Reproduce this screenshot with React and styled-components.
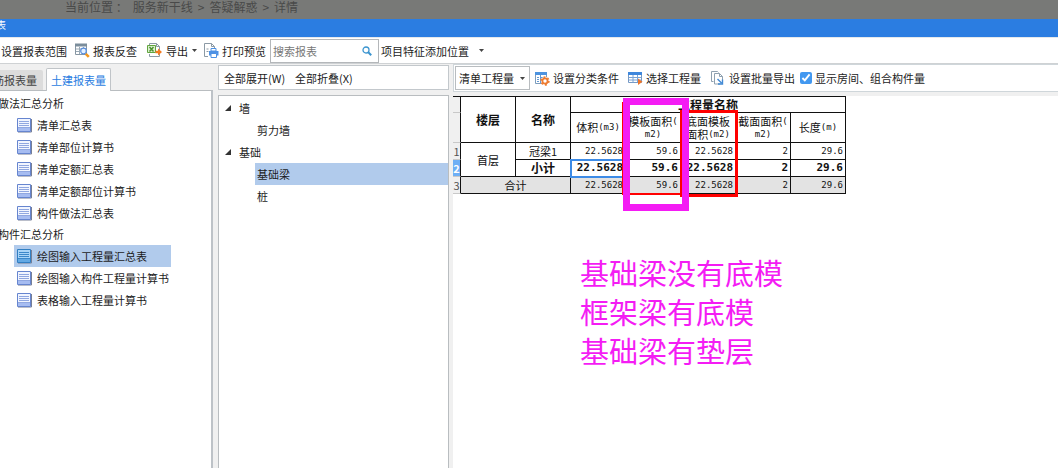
import React, { useState } from 'react'
import styled, { createGlobalStyle, css } from 'styled-components'

const BLUE = '#2b7de1'
const SELECTED = '#b1cbec'
const PANEL_BG = '#f0f0f0'
const LINE = '#c3c8cc'
const MARKER = '#f41cf4'

const GlobalStyle = createGlobalStyle`
  * {
    box-sizing: border-box;
  }

  body {
    margin: 0;
    background: ${PANEL_BG};
  }

  body, button, input, select {
    font-family: "Noto Sans CJK SC", sans-serif;
    font-size: 11px;
    line-height: 16px;
    color: #1c1c1c;
  }

  ul {
    margin: 0;
    padding: 0;
    list-style: none;
  }
`

const Page = styled.div`
  display: flex;
  flex-direction: column;
  min-height: 100vh;
  overflow: hidden;
`

const Breadcrumb = styled.nav`
  display: flex;
  gap: 5px;
  height: 19px;
  padding-left: 65px;
  background: #787977;
  color: #494949;
  font-size: 12px;
  line-height: 14px;
  white-space: pre;
`

const Crumb = styled.a`
  color: inherit;
  text-decoration: none;
`

const TitleBar = styled.header`
  display: flex;
  height: 18px;
  background: ${BLUE};
`

const Title = styled.div`
  display: flex;
  justify-content: flex-end;
  width: 6px;
  overflow: hidden;
  color: #fff;
  font-size: 10px;
  line-height: 12px;
  white-space: nowrap;
`

const Toolbar = styled.div`
  display: flex;
  align-items: center;
  height: 27px;
  padding-left: 1px;
  background: #fff;
  border-top: 1px solid #e4e8ec;
  border-bottom: 1px solid #cfd2d4;
`

const ToolButton = styled.button`
  display: flex;
  align-items: center;
  flex: none;
  gap: ${p => p.$gap || 3}px;
  margin: 0 ${p => p.$after || 0}px 0 0;
  padding: 0;
  border: none;
  background: none;
  white-space: nowrap;
  cursor: pointer;
`

const Search = styled.label`
  display: flex;
  align-items: center;
  flex: none;
  width: 109px;
  height: 24px;
  margin-right: 2px;
  padding: 0 6px 0 2px;
  border: 1px solid #b4b7ba;
  background: #fff;
`

const SearchInput = styled.input`
  flex: 1;
  min-width: 0;
  padding: 0;
  border: none;
  outline: none;
  background: none;

  &::placeholder {
    color: #777;
    opacity: 1;
  }
`

const Main = styled.main`
  display: flex;
  flex: 1;
  gap: 5px;
`

const Reports = styled.aside`
  display: flex;
  flex-direction: column;
  flex: none;
  width: 213px;
`

const Tabs = styled.div`
  display: flex;
  align-items: flex-end;
  gap: 3px;
  height: 27px;
  margin-bottom: -1px;
`

const Tab = styled.button`
  display: flex;
  justify-content: flex-end;
  align-items: center;
  height: 20px;
  width: 43px;
  margin: 0 0 1px;
  padding: 0 6px 0 0;
  overflow: hidden;
  border: none;
  border-radius: 0 2px 0 0;
  background: #dcdcdc;
  color: #444;
  white-space: nowrap;

  ${p => p.$active && css`
    width: auto;
    height: 23px;
    margin: 0;
    padding: 0 4px;
    border: 1px solid #c0c4c8;
    border-bottom: none;
    border-radius: 2px 2px 0 0;
    background: #fff;
    color: ${BLUE};
    z-index: 1;
  `}
`

const ReportPanel = styled.div`
  flex: 1;
  padding-top: 2px;
  background: #fff;
  border-top: 1px solid #b9bdc0;
  border-right: 2px solid #bdc2c7;
`

const GroupName = styled.div`
  display: flex;
  justify-content: flex-end;
  width: 64px;
  height: 21px;
  overflow: hidden;
  line-height: 21px;
  white-space: nowrap;
`

const ReportList = styled.ul`
  width: max-content;
  margin-left: 14px;
`

const Report = styled.li`
  background: ${p => (p.$selected ? SELECTED : 'none')};
`

const ReportButton = styled(ToolButton)`
  height: 22px;
  gap: 5px;
  padding: 0 2px;
`

const Elements = styled.section`
  display: flex;
  flex-direction: column;
  flex: none;
  gap: 5px;
  width: 231px;
  padding-top: 1px;
`

const ElementTools = styled.div`
  display: flex;
  align-items: center;
  height: 25px;
  padding-left: 5px;
  border: 1px solid ${LINE};
  background: #fff;
`

const ElementTree = styled.ul`
  flex: 1;
  padding: 1px 0 0 6px;
  border: 1px solid #b9bdc0;
  border-bottom: none;
  background: #fff;
`

const Branch = styled.div`
  display: flex;
  align-items: center;
  gap: 8px;
  height: 22px;
`

const Leaf = styled.li`
  height: 22px;
  margin-left: 30px;
  padding-left: 2px;
  line-height: 22px;
  background: ${p => (p.$selected ? SELECTED : 'none')};
`

const Sheet = styled.section`
  display: flex;
  flex-direction: column;
  flex: 1;
  min-width: 0;
  margin-left: -1px;
`

const SheetTools = styled.div`
  display: flex;
  align-items: center;
  height: 28px;
  margin-bottom: 4px;
  padding-left: 1px;
  border: solid #cfd6da;
  border-width: 1px 0 1px 1px;
  background: #fff;
`

const Dropdown = styled.div`
  display: grid;
  align-items: center;
  flex: none;
  width: 75px;
  margin-right: 5px;

  > * {
    grid-area: 1 / 1;
  }

  > svg {
    justify-self: end;
    margin-right: 5px;
    pointer-events: none;
  }
`

const Select = styled.select`
  appearance: none;
  width: 100%;
  height: 24px;
  padding: 0 14px 0 3px;
  border: 1px solid #b9bdc0;
  border-radius: 0;
  background: #fff;
`

const Check = styled.label`
  display: flex;
  align-items: center;
  flex: none;
  gap: 3px;
  white-space: nowrap;
`

const CheckBox = styled.input`
  width: 12px;
  height: 12px;
  margin: 0;
  accent-color: #4298f0;
`

const Canvas = styled.div`
  position: relative;
  flex: 1;
  background: #fff;
`

const Table = styled.table`
  table-layout: fixed;
  width: 393px;
  border-collapse: separate;
  border-spacing: 0;
  border-top: 1px solid #111;
  color: #111;
`

const Col = styled.col`
  width: ${p => p.$width}px;
`

const Row = styled.tr`
  height: ${p => p.$height}px;
  background: ${p => (p.$total ? '#e3e3e3' : '#fff')};
`

const Gutter = styled.th`
  padding: 0;
  border-right: 1px solid #111;
  border-bottom: 1px solid #c8c8c8;
  background: ${p => (p.$selected ? '#6eaff5' : PANEL_BG)};
  color: ${p => (p.$selected ? '#fff' : '#555')};
  font-weight: ${p => (p.$selected ? 700 : 400)};
  line-height: 14px;
`

const Head = styled.th`
  padding: 0;
  border-right: 1px solid #111;
  border-bottom: 1px solid #111;
  font-size: ${p => (p.$bold ? 12 : 11)}px;
  font-weight: ${p => (p.$bold ? 700 : 400)};
  line-height: ${p => (p.$bold ? 14 : 13)}px;
  white-space: nowrap;
`

// one line of a two-line column heading
const HeadLine = styled.div`
  display: flex;
  align-items: center;
  justify-content: center;
  height: 13px;
`

const Cell = styled.td`
  padding: 0;
  border-right: 1px solid #111;
  border-bottom: 1px solid #111;
  font-size: ${p => (p.$bold ? 12 : 11)}px;
  font-weight: ${p => (p.$bold ? 700 : 400)};
  line-height: 14px;
  text-align: center;
`

const Value = styled(Cell)`
  padding-right: 2px;
  font-family: "DejaVu Sans Mono", monospace;
  font-size: ${p => (p.$bold ? 11 : 9)}px;
  text-align: right;

  ${p => p.$selected && css`
    outline: 2px solid #3d8be6;
    outline-offset: -1px;
  `}
`

const Unit = styled.span`
  font-family: "DejaVu Sans Mono", monospace;
  font-size: 9px;
  line-height: 13px;
`

// hand-drawn marks laid over the sheet
const Frame = styled.div`
  position: absolute;
  left: ${p => p.$x}px;
  top: ${p => p.$y}px;
  width: ${p => p.$w}px;
  height: ${p => p.$h}px;
  border: ${p => p.$line}px solid ${p => p.$color};
  pointer-events: none;
`

const Note = styled.div`
  position: absolute;
  left: 127px;
  top: 157px;
  color: ${MARKER};
  font-size: 29px;
  line-height: 39px;
  white-space: nowrap;
`

const Caret = () => (
  <svg width="5" height="3" viewBox="0 0 5 3">
    <path d="M0 0h5L2.500 3z" fill="#444" />
  </svg>
)

const Expander = () => (
  <svg width="6" height="6" viewBox="0 0 6 6">
    <path d="M6 0v6H0z" fill="#333" />
  </svg>
)

const SearchIcon = () => (
  <svg width="10" height="10" viewBox="0 0 10 10" fill="none" stroke="#3b94cf">
    <circle cx="4" cy="4" r="3" strokeWidth="1.300" />
    <path d="M6.300 6.300L9.200 9.200" strokeWidth="2" />
  </svg>
)

const TableSearchIcon = () => (
  <svg width="15" height="15" viewBox="0 0 15 15" fill="none">
    <path d="M.5 1.500h11v10H.5z" fill="#fff" stroke="#8796a3" />
    <path d="M0 .5h12v3H0z" fill="#7b8d9b" />
    <path d="M1 6h5M1 8.500h4M4.500 4v7M8.500 4v2" stroke="#9aa9b5" />
    <circle cx="8.500" cy="8" r="2.800" fill="#e4f0ff" stroke="#5a8fdc" strokeWidth="1.200" />
    <path d="M10.800 10.800l3 3" stroke="#f5981d" strokeWidth="2.600" />
  </svg>
)

const ExportIcon = () => (
  <svg width="15" height="15" viewBox="0 0 15 15" fill="none">
    <path d="M2.500 2V.5h7l3 3v10h-10V11" fill="#fff" stroke="#8c9aa5" />
    <path d="M9.500.5v3h3" stroke="#8c9aa5" />
    <path d="M.5 2.500h8v7h-8z" fill="#dcefd0" stroke="#61a53e" />
    <path d="M2.500 4l4 4.500M6.500 4l-4 4.500" stroke="#4c9330" strokeWidth="1.500" />
    <path d="M8.500 7.800h2.500V5.500L15 9l-4 3.500v-2.300H8.500z" fill="#f47b20" />
  </svg>
)

const PrintIcon = () => (
  <svg width="15" height="15" viewBox="0 0 15 15" fill="none">
    <path d="M4 13.500H.5V.5h7l3 3V6" fill="#fff" stroke="#8c9aa5" />
    <path d="M7.500.5v3h3M2.500 6h2M2.500 8.500h2" stroke="#8c9aa5" />
    <path d="M7 5.500h5V8H7z" fill="#fff" stroke="#4d91e4" />
    <path d="M5 8h9.500v4.500H5z" fill="#4d91e4" />
    <path d="M7 10.500h5.500v4H7z" fill="#fff" stroke="#4d91e4" />
  </svg>
)

const ReportIcon = ({ selected }) => (
  <svg width="16" height="16" viewBox="0 0 16 16" fill="none">
    <path d="M2 15h13.500V2" stroke="#777f96" />
    <path d="M1.500 1.500h13v13h-13z" fill={selected ? '#a8d4f7' : '#f1f5ff'} stroke={selected ? '#317fc3' : '#6685cf'} />
    <path d="M2 11h12v3H2z" fill={selected ? '#63a9e4' : '#a6bcf1'} />
    <path d="M3 4.500h10M3 6.500h10M3 8.500h10M2 10.500h12" stroke={selected ? '#3b88ca' : '#90a7e0'} />
  </svg>
)

const SheetGearIcon = () => (
  <svg width="15" height="15" viewBox="0 0 15 15" fill="none">
    <path d="M.5 1.500h11v11H.5z" fill="#fff" stroke="#7c9dbd" />
    <path d="M0 1h12v3H0z" fill="#4d93df" />
    <path d="M2 6.500h2M2 8.500h2M2 10.500h2M6 6.500h4M5.500 4v8" stroke="#6399d2" />
    <circle cx="10" cy="10" r="4" fill="#fff" />
    <circle cx="10" cy="10" r="2.600" stroke="#ee7c31" strokeWidth="1.800" />
    <circle cx="10" cy="10" r="3.900" stroke="#ee7c31" strokeWidth="1.600" strokeDasharray="2 2.080" />
  </svg>
)

const GridIcon = () => (
  <svg width="15" height="14" viewBox="0 0 15 14" fill="none">
    <path d="M.5 1.500h13v10H.5z" fill="#fff" stroke="#7599c5" />
    <path d="M0 1h14v3H0z" fill="#3f87dc" />
    <path d="M1 6.500h12M1 9h12M5 4v7.500M9.500 4v7.500" stroke="#7aa4d6" />
    <path d="M10 7.500l4.500 3.200L10 14z" fill="#ee7427" />
  </svg>
)

const PagesIcon = () => (
  <svg width="13" height="14" viewBox="0 0 13 14" fill="none" stroke="#8fa1b0">
    <path d="M2.500 10.500h-2V.5h6l1 1" />
    <path d="M9 13H3.500V2.500h5l3 3v4" fill="#fff" />
    <path d="M8.500 2.500v3h3" />
    <path d="M6.500 8l4 4M11.500 8.500V13H7" stroke="#4189d4" strokeWidth="1.400" />
  </svg>
)

const billReports = ['清单汇总表', '清单部位计算书', '清单定额汇总表', '清单定额部位计算书', '构件做法汇总表']
const elementReports = ['绘图输入工程量汇总表', '绘图输入构件工程量计算书', '表格输入工程量计算书']

const ReportGroup = ({ name, reports, current, onSelect }) => (
  <>
    <GroupName>{name}</GroupName>
    <ReportList>
      {reports.map(report => (
        <Report key={report} $selected={report === current}>
          <ReportButton onClick={() => onSelect(report)}>
            <ReportIcon selected={report === current} />
            {report}
          </ReportButton>
        </Report>
      ))}
    </ReportList>
  </>
)

const QuantityTable = () => (
  <Table>
    <colgroup>
      <Col $width={8} />
      {[1, 2, 3, 4, 5, 6, 7].map(n => <Col key={n} $width={55} />)}
    </colgroup>
    <thead>
      <Row $height={16}>
        <Gutter />
        <Head $bold rowSpan={2}>楼层</Head>
        <Head $bold rowSpan={2}>名称</Head>
        <Head $bold colSpan={5}>工程量名称</Head>
      </Row>
      <Row $height={30}>
        <Gutter />
        <Head><HeadLine>体积<Unit>(m3)</Unit></HeadLine></Head>
        <Head>
          <HeadLine>模板面积<Unit>(</Unit></HeadLine>
          <HeadLine><Unit>m2)</Unit></HeadLine>
        </Head>
        <Head>
          <HeadLine>底面模板</HeadLine>
          <HeadLine>面积<Unit>(m2)</Unit></HeadLine>
        </Head>
        <Head>
          <HeadLine>截面面积<Unit>(</Unit></HeadLine>
          <HeadLine><Unit>m2)</Unit></HeadLine>
        </Head>
        <Head><HeadLine>长度<Unit>(m)</Unit></HeadLine></Head>
      </Row>
    </thead>
    <tbody>
      <Row $height={17}>
        <Gutter>1</Gutter>
        <Cell rowSpan={2}>首层</Cell>
        <Cell>冠梁1</Cell>
        <Value>22.5628</Value>
        <Value>59.6</Value>
        <Value>22.5628</Value>
        <Value>2</Value>
        <Value>29.6</Value>
      </Row>
      <Row $height={17}>
        <Gutter $selected>2</Gutter>
        <Cell $bold>小计</Cell>
        <Value $bold $selected>22.5628</Value>
        <Value $bold>59.6</Value>
        <Value $bold>22.5628</Value>
        <Value $bold>2</Value>
        <Value $bold>29.6</Value>
      </Row>
      <Row $height={17} $total>
        <Gutter>3</Gutter>
        <Cell colSpan={2}>合计</Cell>
        <Value>22.5628</Value>
        <Value>59.6</Value>
        <Value>22.5628</Value>
        <Value>2</Value>
        <Value>29.6</Value>
      </Row>
    </tbody>
  </Table>
)

const App = () => {
  const [report, setReport] = useState('绘图输入工程量汇总表')

  return (
    <Page>
      <GlobalStyle />
      <Breadcrumb>
        <span>当前位置 ：</span>
        <Crumb href="#news">服务新干线</Crumb>
        <span>&gt;</span>
        <Crumb href="#answers">答疑解惑</Crumb>
        <span>&gt;</span>
        <Crumb href="#detail">详情</Crumb>
      </Breadcrumb>
      <TitleBar><Title>报表</Title></TitleBar>

      <Toolbar>
        <ToolButton $after={8}>设置报表范围</ToolButton>
        <ToolButton $after={10}><TableSearchIcon />报表反查</ToolButton>
        <ToolButton $gap={4} $after={7}><ExportIcon />导出<Caret /></ToolButton>
        <ToolButton $after={4}><PrintIcon />打印预览</ToolButton>
        <Search>
          <SearchInput placeholder="搜索报表" aria-label="搜索报表" />
          <SearchIcon />
        </Search>
        <ToolButton $gap={10}>项目特征添加位置<Caret /></ToolButton>
      </Toolbar>

      <Main>
        <Reports>
          <Tabs>
            <Tab>钢筋报表量</Tab>
            <Tab $active>土建报表量</Tab>
          </Tabs>
          <ReportPanel>
            <ReportGroup name="做法汇总分析" reports={billReports} current={report} onSelect={setReport} />
            <ReportGroup name="构件汇总分析" reports={elementReports} current={report} onSelect={setReport} />
          </ReportPanel>
        </Reports>

        <Elements>
          <ElementTools>
            <ToolButton $after={10}>全部展开(W)</ToolButton>
            <ToolButton>全部折叠(X)</ToolButton>
          </ElementTools>
          <ElementTree>
            <li>
              <Branch><Expander />墙</Branch>
              <ul>
                <Leaf>剪力墙</Leaf>
              </ul>
            </li>
            <li>
              <Branch><Expander />基础</Branch>
              <ul>
                <Leaf $selected>基础梁</Leaf>
                <Leaf>桩</Leaf>
              </ul>
            </li>
          </ElementTree>
        </Elements>

        <Sheet>
          <SheetTools>
            <Dropdown>
              <Select aria-label="工程量类型">
                <option>清单工程量</option>
              </Select>
              <Caret />
            </Dropdown>
            <ToolButton $after={9}><SheetGearIcon />设置分类条件</ToolButton>
            <ToolButton $after={10}><GridIcon />选择工程量</ToolButton>
            <ToolButton $gap={5} $after={5}><PagesIcon />设置批量导出</ToolButton>
            <Check>
              <CheckBox type="checkbox" defaultChecked />
              显示房间、组合构件量
            </Check>
          </SheetTools>
          <Canvas>
            <QuantityTable />
            <Frame $x={169} $y={6} $w={62} $h={93} $line={2} $color="#f00" />
            <Frame $x={227} $y={14} $w={58} $h={87} $line={3} $color="#f00" />
            <Frame $x={170} $y={2} $w={66} $h={113} $line={7} $color={MARKER} />
            <Note>
              基础梁没有底模<br />
              框架梁有底模<br />
              基础梁有垫层
            </Note>
          </Canvas>
        </Sheet>
      </Main>
    </Page>
  )
}

export default App
